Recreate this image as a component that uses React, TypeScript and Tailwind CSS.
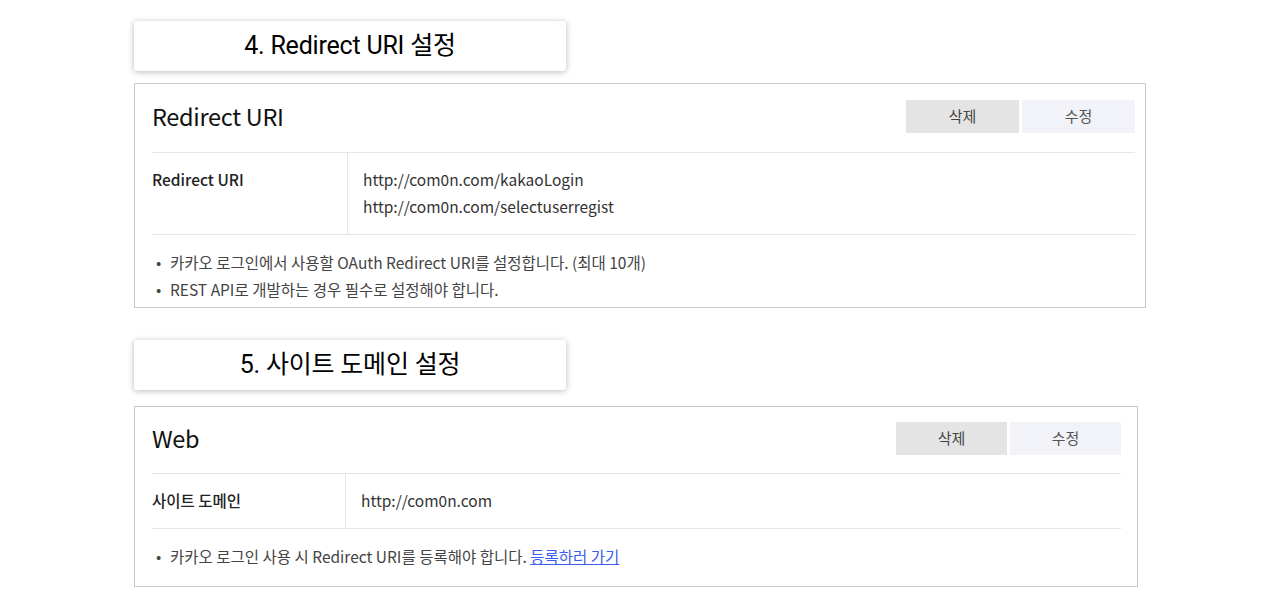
const font = { fontFamily: '"Noto Sans CJK KR", "Noto Sans", sans-serif' };
const headFont = { fontFamily: 'Roboto, "Noto Sans CJK KR", sans-serif' };

function SectionHeading({ children }: { children: React.ReactNode }) {
  return (
    <div className="w-[432px] h-[50px] bg-white rounded-[3px] shadow-[0_1px_6px_rgba(0,0,0,0.28)] flex items-center justify-center">
      <span className="text-[25px] font-normal text-black tracking-[-0.2px]" style={headFont}>{children}</span>
    </div>
  );
}

function ActionButtons({ w }: { w: string }) {
  return (
    <div className="flex gap-[3px]">
      <button className={`${w} h-[33px] bg-[#e4e4e4] text-[15px] text-[#444]`}>삭제</button>
      <button className={`${w} h-[33px] bg-[#f2f3f8] text-[15px] text-[#555]`}>수정</button>
    </div>
  );
}

export default function App() {
  return (
    <div className="w-[1279px] h-[607px] bg-white pl-[134px] pt-[21px]" style={font}>
      <SectionHeading>4. Redirect URI 설정</SectionHeading>

      <div className="mt-[12px] w-[1012px] border border-[#c9c9c9] pl-[17px] pr-[10px] pt-[16px] pb-[4px]">
        <div className="flex items-center justify-between pb-[19px] border-b border-[#e6e6e6]">
          <h2 className="text-[23.5px] leading-[33px] text-[#111] tracking-[-0.3px]">Redirect URI</h2>
          <ActionButtons w="w-[113px]" />
        </div>
        <div className="flex border-b border-[#e6e6e6]">
          <div className="w-[196px] shrink-0 border-r border-[#e6e6e6] pt-[13px] pb-[14px] text-[15.5px] leading-[27px] font-medium text-[#222]">
            Redirect URI
          </div>
          <div className="pl-[15px] pt-[13px] pb-[14px] text-[15.5px] leading-[27px] text-[#333]">
            <div>http://com0n.com/kakaoLogin</div>
            <div>http://com0n.com/selectuserregist</div>
          </div>
        </div>
        <ul className="pt-[14px] text-[15.5px] leading-[27px] text-[#444]">
          <li className="flex"><span className="w-[18px] pl-[4px]">•</span>카카오 로그인에서 사용할 OAuth Redirect URI를 설정합니다. (최대 10개)</li>
          <li className="flex"><span className="w-[18px] pl-[4px]">•</span>REST API로 개발하는 경우 필수로 설정해야 합니다.</li>
        </ul>
      </div>

      <div className="mt-[32px]">
        <SectionHeading>5. 사이트 도메인 설정</SectionHeading>
      </div>

      <div className="mt-[16px] w-[1004px] border border-[#c9c9c9] pl-[17px] pr-[16px] pt-[15px] pb-[16px]">
        <div className="flex items-center justify-between pb-[18px] border-b border-[#e6e6e6]">
          <h2 className="text-[23.5px] leading-[33px] text-[#111] tracking-[-0.3px]">Web</h2>
          <ActionButtons w="w-[111px]" />
        </div>
        <div className="flex border-b border-[#e6e6e6]">
          <div className="w-[194px] shrink-0 border-r border-[#e6e6e6] pt-[13px] pb-[14px] text-[15.5px] leading-[27px] font-medium text-[#222]">
            사이트 도메인
          </div>
          <div className="pl-[15px] pt-[13px] pb-[14px] text-[15.5px] leading-[27px] text-[#333]">
            http://com0n.com
          </div>
        </div>
        <ul className="pt-[14px] text-[15.5px] leading-[27px] text-[#444]">
          <li className="flex">
            <span className="w-[18px] pl-[4px]">•</span>
            카카오 로그인 사용 시 Redirect URI를 등록해야 합니다.&nbsp;
            <a href="#" className="text-[#3a5cf0] underline">등록하러 가기</a>
          </li>
        </ul>
      </div>
    </div>
  );
}
